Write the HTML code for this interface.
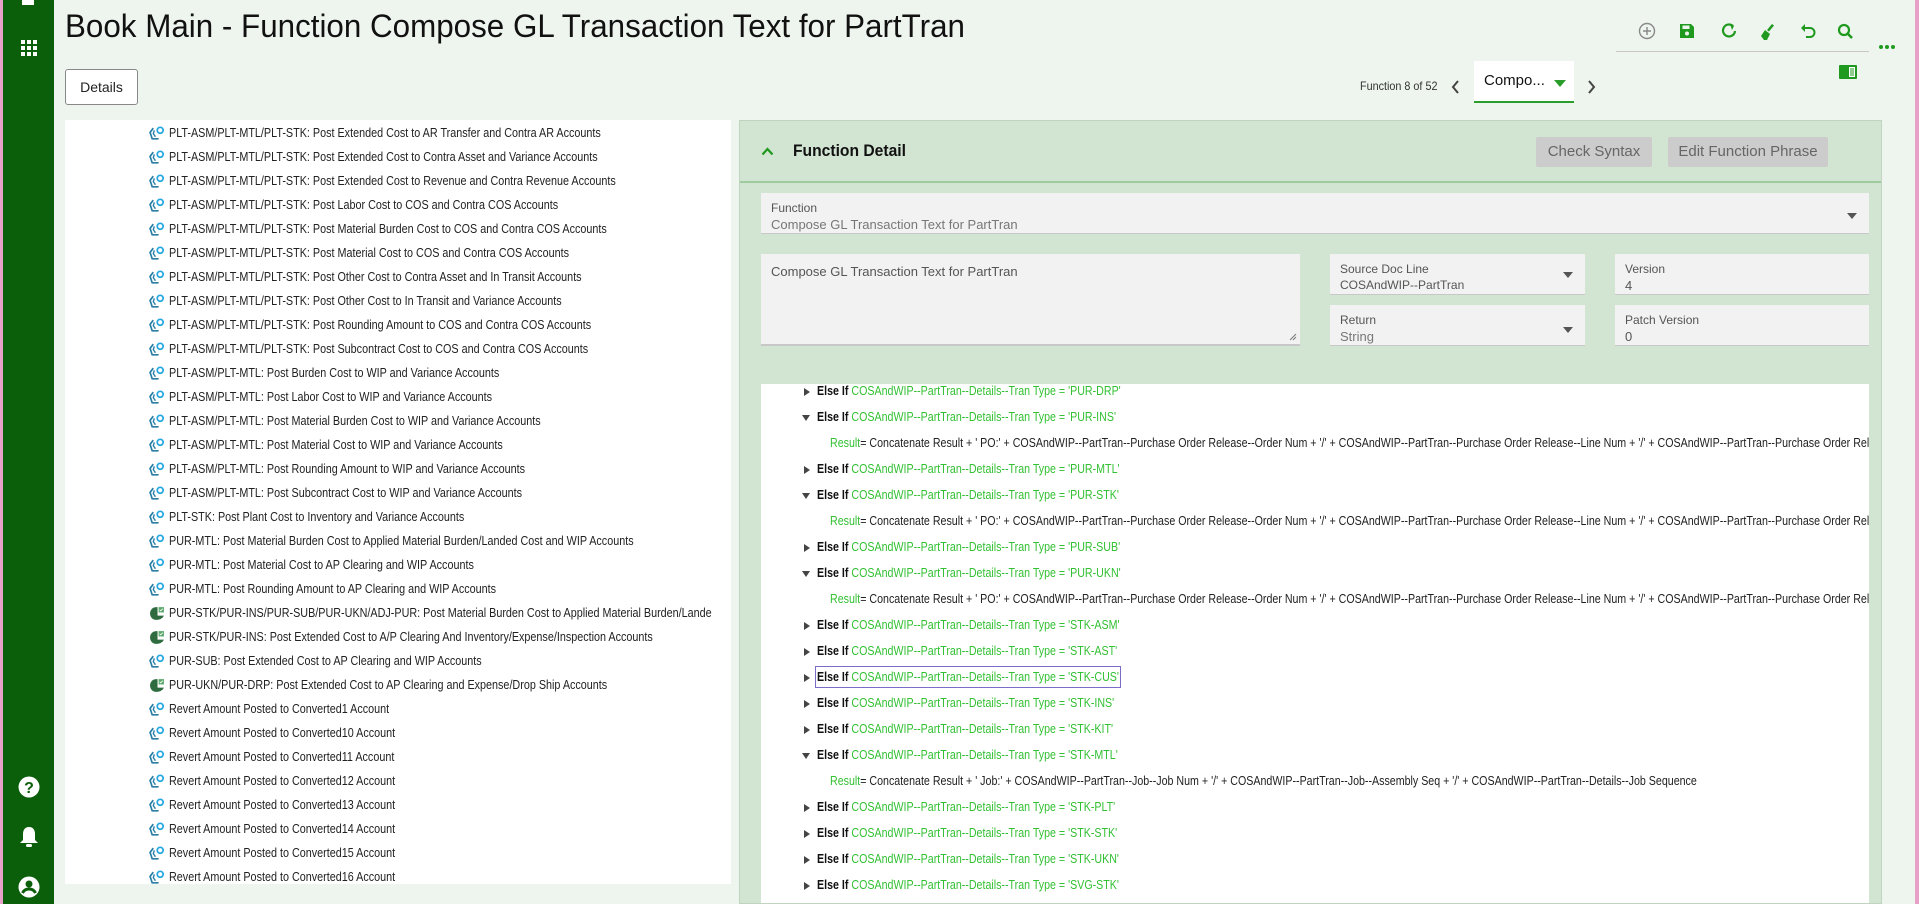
<!DOCTYPE html>
<html><head><meta charset="utf-8"><style>
*{box-sizing:border-box;margin:0;padding:0}
body{width:1919px;height:904px;overflow:hidden;background:#eef5ee;font-family:"Liberation Sans",sans-serif;position:relative;color:#222}
.abs{position:absolute}
.n{display:inline-block;white-space:nowrap;transform:scaleX(.85);transform-origin:0 50%}
#side{left:0;top:0;width:54px;height:904px;background:#0b5f0b;border-left:3px solid #e7a0c8}
#pink{right:0;top:0;width:4px;height:904px;background:#e7a0c8}
.row{position:absolute;left:0;height:20px;line-height:20px;font-size:13px;white-space:nowrap}
.row svg{position:absolute;left:84px;top:3px}
.row .n{position:absolute;left:104px;transform:scaleX(.83)}
.fld{position:absolute;background:#f2f2f2;border-bottom:1px solid #c8c8c8}
.lbl{position:absolute;left:10px;top:8px;font-size:12px;color:#555}
.val{position:absolute;left:10px;top:24px;font-size:13px;color:#777}
.arr{position:absolute;right:12px;top:18px;width:0;height:0;border-left:5px solid transparent;border-right:5px solid transparent;border-top:6px solid #555}
.cl{position:absolute;left:0;height:20px;line-height:20px;font-size:13px;white-space:nowrap}
.cl .n{transform:scaleX(.82)}
.g{color:#33c033}
.b{font-weight:bold;color:#111}
.tr{position:absolute;left:43px;top:7px;width:0;height:0;border-top:4px solid transparent;border-bottom:4px solid transparent;border-left:6px solid #444}
.td{position:absolute;left:41px;top:8px;width:0;height:0;border-left:4px solid transparent;border-right:4px solid transparent;border-top:6px solid #444}
.btn{position:absolute;background:#ccc;color:#666;font-size:15px;text-align:center;line-height:30px;border-radius:2px}
</style></head><body>
<div id="side" class="abs">
 <div class="abs" style="left:19px;top:0;width:12px;height:5px;background:#fff"></div>
 <svg class="abs" style="left:18px;top:40px" width="16" height="16" viewBox="0 0 16 16" fill="#fff"><rect x="0" y="0" width="4" height="4"/><rect x="6" y="0" width="4" height="4"/><rect x="12" y="0" width="4" height="4"/><rect x="0" y="6" width="4" height="4"/><rect x="6" y="6" width="4" height="4"/><rect x="12" y="6" width="4" height="4"/><rect x="0" y="12" width="4" height="4"/><rect x="6" y="12" width="4" height="4"/><rect x="12" y="12" width="4" height="4"/></svg>
 <svg class="abs" style="left:15px;top:776px" width="22" height="22" viewBox="0 0 22 22"><circle cx="11" cy="11" r="10.5" fill="#fff"/><text x="11" y="17" text-anchor="middle" font-size="16" font-weight="bold" fill="#0b5f0b" font-family="Liberation Sans">?</text></svg>
 <svg class="abs" style="left:16px;top:826px" width="20" height="22" viewBox="0 0 20 22" fill="#fff"><path d="M10 1c-4 0-6 3-6 7v6l-3 3h18l-3-3V8c0-4-2-7-6-7z"/><rect x="7" y="18" width="6" height="3" rx="1.5"/></svg>
 <svg class="abs" style="left:15px;top:876px" width="22" height="22" viewBox="0 0 22 22"><circle cx="11" cy="11" r="10.5" fill="#fff"/><circle cx="11" cy="8" r="3.5" fill="#0b5f0b"/><path d="M4.5 17c1.5-3 4-4 6.5-4s5 1 6.5 4" stroke="#0b5f0b" stroke-width="3" fill="none"/></svg>
</div>
<div id="pink" class="abs"></div>

<div class="abs" style="left:65px;top:8px;font-size:32px;color:#111;white-space:nowrap;transform:scaleX(.98);transform-origin:0 0">Book Main - Function Compose GL Transaction Text for PartTran</div>

<svg class="abs" style="left:1638px;top:22px" width="220" height="20" viewBox="0 0 220 20">
 <circle cx="9" cy="9" r="7.5" fill="none" stroke="#888" stroke-width="1.4"/><path d="M9 5v8M5 9h8" stroke="#888" stroke-width="1.4"/>
 <g transform="translate(42,2)" fill="#1f9a1f"><path d="M0 0h11l3 3v11H0z"/><rect x="2.5" y="1.5" width="7" height="3.5" fill="#eef5ee"/><circle cx="7" cy="9.5" r="2" fill="#eef5ee"/></g>
 <path d="M95 4a6 6 0 1 0 2 5" fill="none" stroke="#1f9a1f" stroke-width="2.2"/><path d="M92 2l4 2-2 4z" fill="#1f9a1f"/>
 <g transform="translate(122,2)" fill="#1f9a1f"><path d="M12 0l2 1.5-5 6-2-1.5z"/><path d="M5 6l5 4-3 6H4l-3-4z"/></g>
 <path d="M166 6h6a4 4 0 0 1 0 9h-4" fill="none" stroke="#1f9a1f" stroke-width="2"/><path d="M163 6l4-4v8z" fill="#1f9a1f"/>
 <circle cx="206" cy="8" r="5" fill="none" stroke="#1f9a1f" stroke-width="2.2"/><path d="M209.5 11.5l4.5 4.5" stroke="#1f9a1f" stroke-width="2.6"/>
</svg>
<div class="abs" style="left:1616px;top:51px;width:253px;height:1px;background:#c8c8c8"></div>
<div class="abs" style="left:1879px;top:45px;width:20px;height:5px">
 <span class="abs" style="left:0;top:0;width:4px;height:4px;border-radius:2px;background:#1f9a1f"></span>
 <span class="abs" style="left:6px;top:0;width:4px;height:4px;border-radius:2px;background:#1f9a1f"></span>
 <span class="abs" style="left:12px;top:0;width:4px;height:4px;border-radius:2px;background:#1f9a1f"></span>
</div>
<svg class="abs" style="left:1839px;top:65px" width="18" height="14" viewBox="0 0 18 14"><rect width="18" height="14" rx="1" fill="#1f9a1f"/><rect x="10" y="2" width="6" height="10" fill="#fff"/><path d="M11 4h4M11 6h4M11 8h4M11 10h4" stroke="#1f9a1f" stroke-width="1"/></svg>

<div class="abs" style="left:65px;top:69px;width:73px;height:36px;border:1px solid #888;border-radius:3px;background:#fff;font-size:14px;text-align:center;line-height:34px"><span>Details</span></div>

<div class="abs" style="left:1360px;top:79px;font-size:12px;color:#333;white-space:nowrap"><span class="n" style="transform:scaleX(.9)">Function 8 of 52</span></div>
<svg class="abs" style="left:1451px;top:80px" width="9" height="14" viewBox="0 0 9 14"><path d="M7 1L2 7l5 6" fill="none" stroke="#444" stroke-width="2"/></svg>
<div class="abs" style="left:1474px;top:61px;width:100px;height:42px;background:#fff;border-bottom:2px solid #2a9d2a"><span class="abs" style="left:10px;top:11px;font-size:15px;color:#111">Compo...</span><span class="abs" style="left:80px;top:19px;border-left:6px solid transparent;border-right:6px solid transparent;border-top:7px solid #2a9d2a"></span></div>
<svg class="abs" style="left:1587px;top:80px" width="9" height="14" viewBox="0 0 9 14"><path d="M2 1l5 6-5 6" fill="none" stroke="#444" stroke-width="2"/></svg>

<div class="abs" style="left:65px;top:120px;width:666px;height:764px;background:#fff;overflow:hidden">
<div id="list"></div>
</div>

<div class="abs" style="left:739px;top:120px;width:1143px;height:784px;background:#d2e4d2;border:1px solid #c0d4c0;overflow:hidden">
 <div class="abs" style="left:0;top:60px;width:100%;height:2px;background:#9fcc9f"></div>
 <svg class="abs" style="left:21px;top:26px" width="13" height="9" viewBox="0 0 13 9"><path d="M1.5 7.5L6.5 2l5 5.5" fill="none" stroke="#1f9a1f" stroke-width="2.2"/></svg>
 <div class="abs" style="left:53px;top:20px;font-size:17px;font-weight:bold;color:#111;white-space:nowrap"><span class="n" style="transform:scaleX(.92)">Function Detail</span></div>
 <div class="btn" style="left:796px;top:16px;width:116px;height:30px">Check Syntax</div>
 <div class="btn" style="left:928px;top:16px;width:160px;height:30px">Edit Function Phrase</div>

 <div class="fld" style="left:21px;top:72px;width:1108px;height:41px"><span class="lbl">Function</span><span class="val">Compose GL Transaction Text for PartTran</span><span class="arr" style="top:20px"></span></div>
 <div class="fld" style="left:21px;top:133px;width:539px;height:92px;border-bottom:2px solid #c8c8c8"><span class="val" style="top:10px;color:#555">Compose GL Transaction Text for PartTran</span><svg class="abs" style="right:3px;bottom:3px" width="8" height="8"><path d="M7 1L1 7M7 4L4 7" stroke="#777"/></svg></div>
 <div class="fld" style="left:590px;top:133px;width:255px;height:41px"><span class="lbl">Source Doc Line</span><span class="val" style="color:#555;font-size:12px">COSAndWIP--PartTran</span><span class="arr"></span></div>
 <div class="fld" style="left:590px;top:184px;width:255px;height:41px"><span class="lbl">Return</span><span class="val">String</span><span class="arr" style="top:22px"></span></div>
 <div class="fld" style="left:875px;top:133px;width:254px;height:41px"><span class="lbl">Version</span><span class="val" style="color:#555">4</span></div>
 <div class="fld" style="left:875px;top:184px;width:254px;height:41px"><span class="lbl">Patch Version</span><span class="val" style="color:#555">0</span></div>

 <div class="abs" style="left:21px;top:263px;width:1108px;height:530px;background:#fff;overflow:hidden" id="code"></div>
</div>

<script>
var L=[["PLT-ASM/PLT-MTL/PLT-STK: Post Extended Cost to AR Transfer and Contra AR Accounts",0],
["PLT-ASM/PLT-MTL/PLT-STK: Post Extended Cost to Contra Asset and Variance Accounts",0],
["PLT-ASM/PLT-MTL/PLT-STK: Post Extended Cost to Revenue and Contra Revenue Accounts",0],
["PLT-ASM/PLT-MTL/PLT-STK: Post Labor Cost to COS and Contra COS Accounts",0],
["PLT-ASM/PLT-MTL/PLT-STK: Post Material Burden Cost to COS and Contra COS Accounts",0],
["PLT-ASM/PLT-MTL/PLT-STK: Post Material Cost to COS and Contra COS Accounts",0],
["PLT-ASM/PLT-MTL/PLT-STK: Post Other Cost to Contra Asset and In Transit Accounts",0],
["PLT-ASM/PLT-MTL/PLT-STK: Post Other Cost to In Transit and Variance Accounts",0],
["PLT-ASM/PLT-MTL/PLT-STK: Post Rounding Amount to COS and Contra COS Accounts",0],
["PLT-ASM/PLT-MTL/PLT-STK: Post Subcontract Cost to COS and Contra COS Accounts",0],
["PLT-ASM/PLT-MTL: Post Burden Cost to WIP and Variance Accounts",0],
["PLT-ASM/PLT-MTL: Post Labor Cost to WIP and Variance Accounts",0],
["PLT-ASM/PLT-MTL: Post Material Burden Cost to WIP and Variance Accounts",0],
["PLT-ASM/PLT-MTL: Post Material Cost to WIP and Variance Accounts",0],
["PLT-ASM/PLT-MTL: Post Rounding Amount to WIP and Variance Accounts",0],
["PLT-ASM/PLT-MTL: Post Subcontract Cost to WIP and Variance Accounts",0],
["PLT-STK: Post Plant Cost to Inventory and Variance Accounts",0],
["PUR-MTL: Post Material Burden Cost to Applied Material Burden/Landed Cost and WIP Accounts",0],
["PUR-MTL: Post Material Cost to AP Clearing and WIP Accounts",0],
["PUR-MTL: Post Rounding Amount to AP Clearing and WIP Accounts",0],
["PUR-STK/PUR-INS/PUR-SUB/PUR-UKN/ADJ-PUR: Post Material Burden Cost to Applied Material Burden/Lande",1],
["PUR-STK/PUR-INS: Post Extended Cost to A/P Clearing And Inventory/Expense/Inspection Accounts",1],
["PUR-SUB: Post Extended Cost to AP Clearing and WIP Accounts",0],
["PUR-UKN/PUR-DRP: Post Extended Cost to AP Clearing and Expense/Drop Ship Accounts",1]];
["1","10","11","12","13","14","15","16"].forEach(function(n){L.push(["Revert Amount Posted to Converted"+n+" Account",0])});
var iA='<svg width="16" height="15" viewBox="0 0 15 14"><path d="M4 2L1 6l2 6h6" fill="none" stroke="#2a7fa8" stroke-width="1.6"/><path d="M5 4l-1 3 2 3" fill="none" stroke="#2a7fa8" stroke-width="1.3"/><circle cx="10.5" cy="4" r="2.8" fill="none" stroke="#22a6e0" stroke-width="1.6"/></svg>';
var iB='<svg width="16" height="15" viewBox="0 0 15 14"><path d="M7 1C3 1 1 4 1 7s2 6 6 6 6-2 7-4H8V1z" fill="#2e6b3e"/><rect x="9" y="1" width="5" height="5" fill="#5aa86a"/><path d="M10 3.5l1 1 2-2" stroke="#fff" stroke-width=".8" fill="none"/></svg>';
var h='';L.forEach(function(r,i){h+='<div class="row" style="top:'+(3+i*24)+'px">'+(r[1]?iB:iA)+'<span class="n">'+r[0]+'</span></div>'});
document.getElementById('list').innerHTML=h;
var po="<span class='g'>Result</span>= Concatenate Result + ' PO:' + COSAndWIP--PartTran--Purchase Order Release--Order Num + '/' + COSAndWIP--PartTran--Purchase Order Release--Line Num + '/' + COSAndWIP--PartTran--Purchase Order Release--Release Num";
var job="<span class='g'>Result</span>= Concatenate Result + ' Job:' + COSAndWIP--PartTran--Job--Job Num + '/' + COSAndWIP--PartTran--Job--Assembly Seq + '/' + COSAndWIP--PartTran--Details--Job Sequence";
var C=[["PUR-DRP",0],["PUR-INS",1],[po],["PUR-MTL",0],["PUR-STK",1],[po],["PUR-SUB",0],["PUR-UKN",1],[po],["STK-ASM",0],["STK-AST",0],["STK-CUS",0,1],["STK-INS",0],["STK-KIT",0],["STK-MTL",1],[job],["STK-PLT",0],["STK-STK",0],["STK-UKN",0],["SVG-STK",0]];
h='';C.forEach(function(c,i){var t=-3+i*26;
 if(c.length==1){h+='<div class="cl" style="top:'+t+'px;left:69px"><span class="n">'+c[0]+'</span></div>';}
 else{h+='<div class="cl" style="top:'+t+'px;width:400px"><span class="'+(c[1]?'td':'tr')+'"></span>'+(c[2]?'<span class="abs" style="left:54px;top:-1px;width:306px;height:22px;border:1px solid #7a6cc8"></span>':'')+'<span class="n" style="position:absolute;left:56px"><span class="b">Else If</span> <span class="g">COSAndWIP--PartTran--Details--Tran Type = \''+c[0]+'\'</span></span></div>';}
});
document.getElementById('code').innerHTML=h;
</script>
</body></html>
